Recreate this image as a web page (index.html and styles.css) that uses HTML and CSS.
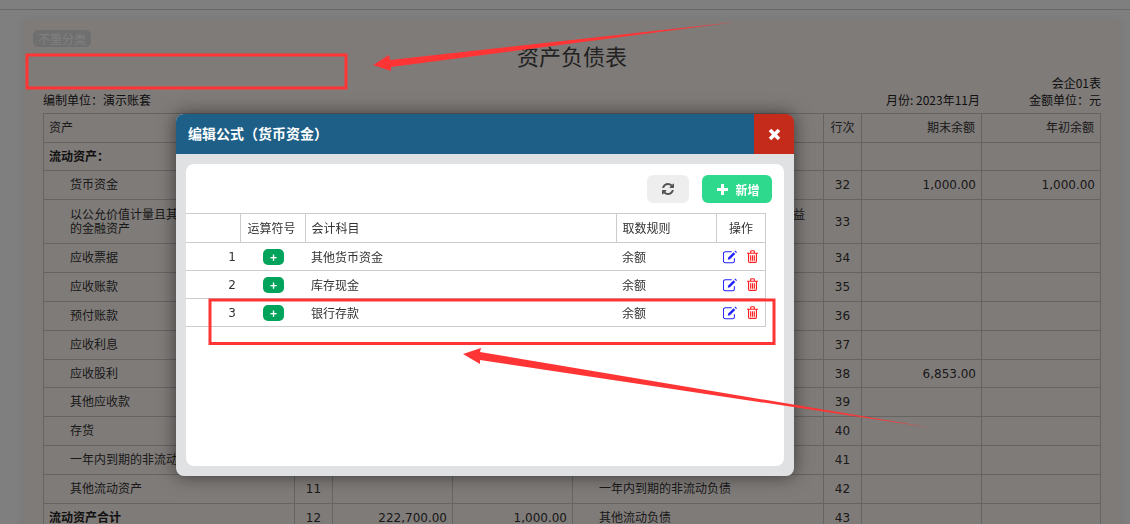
FILE: index.html
```html
<!DOCTYPE html>
<html lang="zh-CN">
<head>
    <meta charset="UTF-8">
    <title>资产负债表</title>
    <link rel="stylesheet" href="styles.css">
</head>
<body>
    <div class="topbar"></div>
    <div class="wrap">
        <div class="card">
            <div class="tag-row"><span class="tag">不重分类</span></div>
            <h1 class="title">资产负债表</h1>
            <div class="form-no">会企01表</div>
            <div class="info">
                <span>编制单位&#xFF1A;演示账套</span>
                <div class="info-right">
                    <span>月份: 2023年11月</span>
                    <span>金额单位&#xFF1A;元</span>
                </div>
            </div>
            <table class="sheet">
                <colgroup>
                    <col class="c-name"><col class="c-line"><col class="c-num"><col class="c-num">
                    <col class="c-name"><col class="c-line"><col class="c-num"><col class="c-num-last">
                </colgroup>
                <tr>
                    <th class="left">资产</th><th></th><th></th><th></th>
                    <th></th><th>行次</th><th class="right">期末余额</th><th class="right">年初余额</th>
                </tr>
                <tr class="short">
                    <td class="strong">流动资产&#xFF1A;</td><td></td><td></td><td></td>
                    <td></td><td></td><td></td><td></td>
                </tr>
                <tr>
                    <td class="sub">货币资金</td><td></td><td></td><td></td>
                    <td></td><td class="no">32</td><td class="num">1,000.00</td><td class="num">1,000.00</td>
                </tr>
                <tr class="tall">
                    <td class="sub">以公允价值计量且其变动<br>的金融资产</td><td></td><td></td><td></td>
                    <td class="tail">益</td><td class="no">33</td><td></td><td></td>
                </tr>
                <tr>
                    <td class="sub">应收票据</td><td></td><td></td><td></td>
                    <td></td><td class="no">34</td><td></td><td></td>
                </tr>
                <tr>
                    <td class="sub">应收账款</td><td></td><td></td><td></td>
                    <td></td><td class="no">35</td><td></td><td></td>
                </tr>
                <tr>
                    <td class="sub">预付账款</td><td></td><td></td><td></td>
                    <td></td><td class="no">36</td><td></td><td></td>
                </tr>
                <tr>
                    <td class="sub">应收利息</td><td></td><td></td><td></td>
                    <td></td><td class="no">37</td><td></td><td></td>
                </tr>
                <tr class="short">
                    <td class="sub">应收股利</td><td></td><td></td><td></td>
                    <td></td><td class="no">38</td><td class="num">6,853.00</td><td></td>
                </tr>
                <tr>
                    <td class="sub">其他应收款</td><td></td><td></td><td></td>
                    <td></td><td class="no">39</td><td></td><td></td>
                </tr>
                <tr>
                    <td class="sub">存货</td><td></td><td></td><td></td>
                    <td></td><td class="no">40</td><td></td><td></td>
                </tr>
                <tr>
                    <td class="sub">一年内到期的非流动资产</td><td></td><td></td><td></td>
                    <td></td><td class="no">41</td><td></td><td></td>
                </tr>
                <tr>
                    <td class="sub">其他流动资产</td><td class="no">11</td><td></td><td></td>
                    <td class="sub">一年内到期的非流动负债</td><td class="no">42</td><td></td><td></td>
                </tr>
                <tr>
                    <td class="strong">流动资产合计</td><td class="no">12</td><td class="num">222,700.00</td><td class="num">1,000.00</td>
                    <td class="sub">其他流动负债</td><td class="no">43</td><td></td><td></td>
                </tr>
            </table>
        </div>
    </div>

    <div class="mask"></div>

    <div class="modal">
        <div class="modal-head">
            <span class="modal-title">编辑公式&#xFF08;货币资金&#xFF09;</span>
            <button type="button" class="modal-close">
                <svg width="13" height="13" viewBox="0 0 13 13"><path d="M2 2l9 9M11 2l-9 9" stroke="#fff" stroke-width="3.6" fill="none"/></svg>
            </button>
        </div>
        <div class="modal-body">
            <div class="panel">
                <div class="toolbar">
                    <button type="button" class="btn btn-refresh">
                        <svg width="12" height="12" viewBox="0 0 1536 1536"><path fill="#555" d="M1511 928q0 5-1 7-64 268-268 434.5t-478 166.5q-146 0-282.5-55t-243.5-157l-129 129q-19 19-45 19t-45-19-19-45v-448q0-26 19-45t45-19h448q26 0 45 19t19 45-19 45l-137 137q71 66 161 102t187 36q134 0 250-65t186-179q11-17 53-117 8-23 30-23h192q13 0 22.5 9.5t9.5 22.5zm25-800v448q0 26-19 45t-45 19h-448q-26 0-45-19t-19-45 19-45l138-138q-148-137-349-137-134 0-250 65t-186 179q-11 17-53 117-8 23-30 23h-199q-13 0-22.5-9.5t-9.5-22.5v-7q65-268 270-434.5t480-166.5q146 0 284 55.5t245 156.5l130-129q19-19 45-19t45 19 19 45z"/></svg>
                    </button>
                    <button type="button" class="btn btn-add">
                        <svg width="11" height="11" viewBox="0 0 11 11"><path fill="#fff" d="M4 0h3v4h4v3H7v4H4V7H0V4h4z"/></svg>
                        新增
                    </button>
                </div>
                <table class="formula">
                    <colgroup>
                        <col class="f-no"><col class="f-op"><col class="f-subject"><col class="f-rule"><col class="f-act">
                    </colgroup>
                    <tr>
                        <th></th><th class="center op-head">运算符号</th><th>会计科目</th><th>取数规则</th><th class="center">操作</th>
                    </tr>
                    <tr>
                        <td class="idx">1</td><td class="center"><span class="op">+</span></td><td>其他货币资金</td><td>余额</td>
                        <td class="actions">
                            <svg class="ic-edit" width="14" height="14" viewBox="0 0 16 16"><use href="#edit"/></svg>
                            <svg class="ic-del" width="11" height="13" viewBox="0 0 12 14"><use href="#trash"/></svg>
                        </td>
                    </tr>
                    <tr>
                        <td class="idx">2</td><td class="center"><span class="op">+</span></td><td>库存现金</td><td>余额</td>
                        <td class="actions">
                            <svg class="ic-edit" width="14" height="14" viewBox="0 0 16 16"><use href="#edit"/></svg>
                            <svg class="ic-del" width="11" height="13" viewBox="0 0 12 14"><use href="#trash"/></svg>
                        </td>
                    </tr>
                    <tr>
                        <td class="idx">3</td><td class="center"><span class="op">+</span></td><td>银行存款</td><td>余额</td>
                        <td class="actions">
                            <svg class="ic-edit" width="14" height="14" viewBox="0 0 16 16"><use href="#edit"/></svg>
                            <svg class="ic-del" width="11" height="13" viewBox="0 0 12 14"><use href="#trash"/></svg>
                        </td>
                    </tr>
                </table>
            </div>
        </div>
    </div>

    <!-- red marks drawn over the screenshot -->
    <svg class="marks" width="1130" height="524" viewBox="0 0 1130 524">
        <rect x="27" y="55" width="319" height="33" fill="none" stroke="#ff3535" stroke-width="3"/>
        <rect x="210" y="300" width="564" height="43.5" fill="none" stroke="#ff3535" stroke-width="3"/>
        <polygon fill="#ff3535" points="373,65 389,55 390,60 736,22 391,67 391,71"/>
        <polygon fill="#ff3535" points="463,354 481,348 480,352 933,428 480,360 480,364"/>
    </svg>

    <svg class="defs" width="0" height="0">
        <symbol id="edit" viewBox="0 0 16 16">
            <path d="M13 9.500v3a2 2 0 0 1-2 2H2.500a2 2 0 0 1-2-2V4a2 2 0 0 1 2-2H10" fill="none" stroke="currentColor" stroke-width="1.2"/>
            <path d="M6 8.500L12 2.500l2 2-6 6-2.500.5z" fill="currentColor"/>
            <path d="M13 1.500l1-1 2 2-1 1z" fill="currentColor"/>
        </symbol>
        <symbol id="trash" viewBox="0 0 12 14">
            <path d="M0 3.500h12M4 3.200V1.600Q4 .7 5 .7h2q1 0 1 .9v1.600M1.700 3.600v8.600q0 1.200 1.200 1.200h6.200q1.200 0 1.200-1.200V3.600M4 5.500v6M6 5.500v6M8 5.500v6" fill="none" stroke="currentColor" stroke-width="1.250"/>
        </symbol>
    </svg>
</body>
</html>
```

FILE: styles.css
```css
html, body {
    margin: 0;
    height: 100%;
    overflow: hidden;
}

body {
    font-family: "Noto Sans CJK SC", sans-serif;
    font-size: 12px;
    color: #333;
    background: #fff;
}

.topbar {
    height: 9px;
    border-bottom: 1px solid #d2d2d2;
}

.wrap {
    padding: 10px 9px 0 23px;
}

.card {
    background: #fff7f3;
    box-shadow: 0 0 10px rgba(0, 0, 0, 0.08);
    padding: 10px 20px 20px;
}

.tag-row {
    height: 17px;
    display: flex;
}

.tag {
    margin-left: -10px;
    width: 58px;
    height: 17px;
    line-height: 17px;
    text-align: center;
    border-radius: 5px;
    background: #dedede;
    color: #fff;
}

.title {
    margin: 0;
    height: 27px;
    line-height: 16px;
    font-size: 22px;
    font-weight: normal;
    text-align: center;
    color: #444;
}

.form-no {
    height: 17px;
    line-height: 17px;
    text-align: right;
    color: #222;
}

.info {
    display: flex;
    justify-content: space-between;
    height: 22px;
    line-height: 17px;
    color: #222;
}

.info-right {
    display: flex;
    gap: 49px;
}

.sheet {
    width: 1057px;
    table-layout: fixed;
    border-collapse: collapse;
    font-family: "DejaVu Sans", "Noto Sans CJK SC", sans-serif;
}

.c-name { width: 251px; }
.c-line { width: 38px; }
.c-num { width: 120px; }
.c-num-last { width: 119px; }

.sheet th, .sheet td {
    height: 29px;
    padding: 0 5px;
    border: 1px solid #c8c8c8;
    box-sizing: border-box;
    font-size: 12px;
    line-height: 14px;
    font-weight: normal;
    color: #333;
    white-space: nowrap;
}

.sheet tr.short td { height: 28px; }
.sheet tr.tall td { height: 44px; }

.sheet .left { text-align: left; }
.sheet .right { text-align: right; padding-right: 6px; }
.sheet .strong { font-weight: bold; color: #222; }
.sheet .sub { padding-left: 26px; }
.sheet .no { text-align: center; }
.sheet .num { text-align: right; }
.sheet .tail { text-align: right; padding: 0 18px 14px 0; }

.mask {
    position: fixed;
    inset: 0;
    background: rgba(0, 0, 0, 0.5);
}

.modal {
    position: absolute;
    left: 176px;
    top: 114px;
    width: 618px;
    height: 362px;
    display: flex;
    flex-direction: column;
    background: #e0e1e3;
    border-radius: 8px;
    box-shadow: 0 0 18px rgba(0, 0, 0, 0.55);
    overflow: hidden;
}

.modal-head {
    height: 40px;
    flex: none;
    display: flex;
    align-items: center;
    justify-content: space-between;
    padding-left: 12px;
    background: #1e5f87;
}

.modal-title {
    padding-bottom: 2px;
    font-size: 14px;
    font-weight: bold;
    color: #fff;
}

.modal-close {
    width: 40px;
    height: 40px;
    padding: 0;
    border: none;
    display: flex;
    align-items: center;
    justify-content: center;
    background: #c42b1a;
}

.modal-body {
    flex: 1;
    padding: 10px;
    display: flex;
}

.panel {
    flex: 1;
    background: #fff;
    border-radius: 8px;
}

.toolbar {
    height: 49px;
    box-sizing: border-box;
    padding: 11px 12px 0 0;
    display: flex;
    justify-content: flex-end;
    gap: 13px;
}

.btn {
    height: 28px;
    padding: 0;
    border: none;
    border-radius: 6px;
    display: flex;
    align-items: center;
    justify-content: center;
    font-family: inherit;
}

.btn-refresh {
    width: 42px;
    background: #eee;
}

.btn-add {
    width: 70px;
    gap: 7px;
    padding-left: 3px;
    box-sizing: border-box;
    background: #2ed98d;
    color: #fff;
    font-size: 12px;
    font-weight: bold;
}

.formula {
    width: 579px;
    table-layout: fixed;
    border-collapse: collapse;
    color: #333;
}

.f-no { width: 54px; }
.f-op { width: 65px; }
.f-subject { width: 311px; }
.f-rule { width: 100px; }
.f-act { width: 49px; }

.formula th, .formula td {
    padding: 0 5px 0 6px;
    box-sizing: border-box;
    font-size: 12px;
    font-weight: normal;
    text-align: left;
}

.formula th {
    height: 29px;
    padding-bottom: 2px;
    border-top: 1px solid #ccc;
    border-bottom: 1px solid #ccc;
    border-right: 1px solid #ccc;
}

.formula td {
    height: 28px;
    padding-bottom: 1px;
    border-bottom: 1px solid #ccc;
}

.formula td:last-child {
    border-right: 1px solid #ccc;
}

.formula .center { text-align: center; }

.formula .op-head { padding-left: 4px; padding-right: 6px; }

.formula .idx {
    text-align: right;
    padding-right: 4px;
    padding-bottom: 0;
    font-family: "DejaVu Sans", sans-serif;
}

.op {
    display: inline-block;
    width: 21px;
    height: 16px;
    margin-left: 1px;
    line-height: 15px;
    border-radius: 5px;
    background: #00a35c;
    color: #fff;
    font-weight: bold;
    text-align: center;
    vertical-align: middle;
}

.formula .actions { white-space: nowrap; padding: 0 0 3px 7px; }
.actions svg { vertical-align: middle; }
.ic-edit { color: #2222ff; margin-right: 7px; }
.ic-del { color: #ff1f1f; }

.marks {
    position: absolute;
    left: 0;
    top: 0;
    pointer-events: none;
}

.defs { position: absolute; }
```
